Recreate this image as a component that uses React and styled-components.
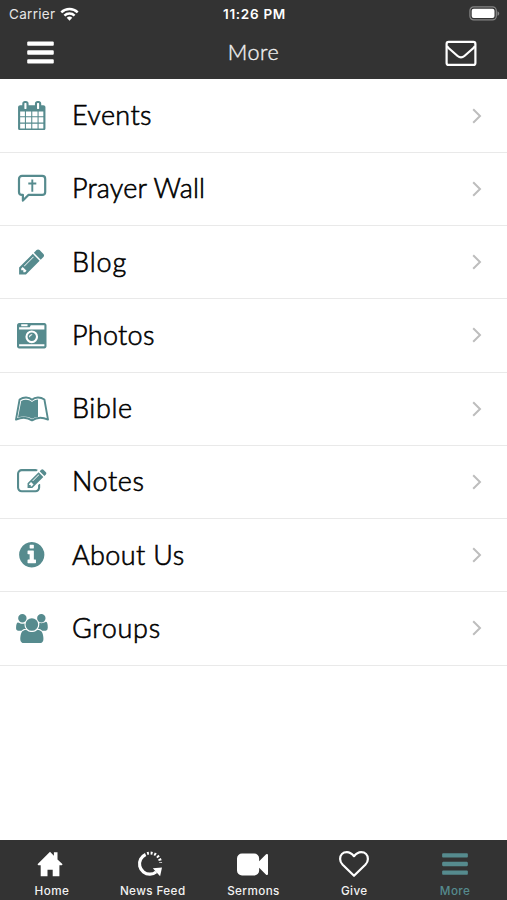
import React from "react";
import styled, { createGlobalStyle } from "styled-components";

const GlobalStyle = createGlobalStyle`
  * {
    box-sizing: border-box;
  }
  body {
    margin: 0;
    background: #fff;
    font-family: Lato, "Liberation Sans", sans-serif;
  }
`;

const CalendarIcon = () => (
  <svg width="29.5" height="29.5" viewBox="0 0 1792 1792" fill="currentColor">
    <path d="M192 1664h288v-288h-288v288zm352 0h320v-288h-320v288zm-352-352h288v-320h-288v320zm352 0h320v-320h-320v320zm-352-384h288v-288h-288v288zm736 736h320v-288h-320v288zm-384-736h320v-288h-320v288zm768 736h288v-288h-288v288zm-384-352h320v-320h-320v320zm-352-864v-288q0-13-9.5-22.5t-22.5-9.5h-64q-13 0-22.5 9.5t-9.5 22.5v288q0 13 9.5 22.5t22.5 9.5h64q13 0 22.5-9.5t9.5-22.5zm736 864h288v-320h-288v320zm-384-384h320v-288h-320v288zm384 0h288v-288h-288v288zm32-480v-288q0-13-9.5-22.5t-22.5-9.5h-64q-13 0-22.5 9.5t-9.5 22.5v288q0 13 9.5 22.5t22.5 9.5h64q13 0 22.5-9.5t9.5-22.5zm384-64v1280q0 52-38 90t-90 38h-1408q-52 0-90-38t-38-90v-1280q0-52 38-90t90-38h128v-96q0-66 47-113t113-47h64q66 0 113 47t47 113v96h384v-96q0-66 47-113t113-47h64q66 0 113 47t47 113v96h128q52 0 90 38t38 90z" />
  </svg>
);

const PrayerIcon = () => (
  <svg width="30" height="30" viewBox="0 0 30 30" fill="none" stroke="currentColor" strokeWidth="2.2">
    <path
      strokeLinejoin="round"
      d="M5 1.900h20.200a3 3 0 0 1 3 3v13a3 3 0 0 1-3 3H11.400L5.900 26.600v-5.700H5a3 3 0 0 1-3-3v-13a3 3 0 0 1 3-3z"
    />
    <path strokeWidth="1.900" d="M15.300 5.500v12.300M11.300 9.500h8" />
  </svg>
);

const PencilIcon = () => (
  <svg width="29.5" height="29.5" viewBox="0 0 1792 1792" fill="currentColor">
    <path d="M491 1536l91-91-235-235-91 91v107h128v128h107zm523-928q0-22-22-22-10 0-17 7l-542 542q-7 7-7 17 0 22 22 22 10 0 17-7l542-542q7-7 7-17zm-54-192l416 416-832 832h-416v-416zm683 96q0 53-37 90l-166 166-416-416 166-165q36-38 90-38 53 0 91 38l235 234q37 39 37 91z" />
  </svg>
);

const CameraIcon = () => (
  <svg width="29.5" height="29.5" viewBox="0 0 1792 1792" fill="currentColor">
    <path d="M928 832q0-14-9-23t-23-9q-66 0-113 47t-47 113q0 14 9 23t23 9 23-9 9-23q0-40 28-68t68-28q14 0 23-9t9-23zm224 130q0 106-75 181t-181 75-181-75-75-181 75-181 181-75 181 75 75 181zm-1024 574h1536v-128h-1536v128zm1152-574q0-159-112.5-271.5t-271.5-112.5-271.5 112.5-112.5 271.5 112.5 271.5 271.5 112.5 271.5-112.5 112.5-271.5zm-1024-642h384v-128h-384v128zm-128 192h1536v-256h-828l-64 128h-644v128zm1664-256v1280q0 53-37.5 90.5t-90.5 37.5h-1536q-53 0-90.5-37.5t-37.5-90.5v-1280q0-53 37.5-90.5t90.5-37.5h1536q53 0 90.5 37.5t37.5 90.5z" />
  </svg>
);

const BookIcon = () => (
  <svg width="34" height="26" viewBox="0 0 34 26" fill="none" stroke="currentColor">
    <path
      strokeWidth="1.900"
      strokeLinejoin="round"
      d="M4.600 3.500c4-2.700 9.300-2.700 12.400.3 3.100-3 8.400-3 12.400-.3L33 23.600c-5.200-2.400-11.600-2.300-16 .8-4.400-3.100-10.800-3.200-16-.8z"
    />
    <path
      fill="currentColor"
      stroke="none"
      d="M6.200 4.900c3.700-1.900 7.900-1.500 10.800 1.200 1.700-1.500 3.700-2.400 6-2.600v17.400c-2.300.2-4.300.8-6 1.900-4-2.500-9-3-14-1.300z"
    />
  </svg>
);

const NotesIcon = () => (
  <svg width="29.5" height="29.5" viewBox="0 0 1792 1792" fill="currentColor">
    <path d="M888 1184l116-116-152-152-116 116v56h96v96h56zm440-720q-16-16-33 1l-350 350q-17 17-1 33t33-1l350-350q17-17 1-33zm80 594v190q0 119-84.5 203.5t-203.5 84.5h-832q-119 0-203.5-84.5t-84.5-203.5v-832q0-119 84.5-203.5t203.5-84.5h832q63 0 117 25 15 7 18 23 3 17-9 29l-49 49q-14 14-32 8-23-6-45-6h-832q-66 0-113 47t-47 113v832q0 66 47 113t113 47h832q66 0 113-47t47-113v-126q0-13 9-22l64-64q15-15 35-7t20 29zm-96-738l288 288-672 672h-288v-288zm444 132l-92 92-288-288 92-92q28-28 68-28t68 28l152 152q28 28 28 68t-28 68z" />
  </svg>
);

const InfoIcon = () => (
  <svg width="29.5" height="29.5" viewBox="0 0 1792 1792" fill="currentColor">
    <path d="M1152 1376v-160q0-14-9-23t-23-9h-96v-512q0-14-9-23t-23-9h-320q-14 0-23 9t-9 23v160q0 14 9 23t23 9h96v320h-96q-14 0-23 9t-9 23v160q0 14 9 23t23 9h448q14 0 23-9t9-23zm-128-896v-160q0-14-9-23t-23-9h-192q-14 0-23 9t-9 23v160q0 14 9 23t23 9h192q14 0 23-9t9-23zm640 416q0 209-103 385.5t-279.5 279.5-385.5 103-385.5-103-279.5-279.5-103-385.5 103-385.5 279.5-279.5 385.5-103 385.5 103 279.5 279.5 103 385.5z" />
  </svg>
);

const GroupsIcon = () => (
  <svg width="33.7" height="29.5" viewBox="0 0 2048 1792" fill="currentColor">
    <path d="M657 896q-162 5-265 128h-134q-82 0-138-40.5t-56-118.5q0-353 124-353 6 0 43.5 21t97.5 42.5 119 21.5q67 0 133-23-5 37-5 66 0 159 90 293zm1071 637q0 120-73 189.5t-194 69.5h-874q-121 0-194-69.5t-73-189.5q0-53 3.5-103.5t14-109 26.5-108.5 43-97.5 62-81 85.5-53.5 111.5-20q10 0 43 21.5t73 48 107 48 135 21.5 135-21.5 107-48 73-48 43-21.5q61 0 111.5 20t85.5 53.5 62 81 43 97.5 26.5 108.5 14 109 3.5 103.5zm-1024-1277q0 106-75 181t-181 75-181-75-75-181 75-181 181-75 181 75 75 181zm704 384q0 159-112.5 271.5t-271.5 112.5-271.5-112.5-112.5-271.5 112.5-271.5 271.5-112.5 271.5 112.5 112.5 271.5zm576 225q0 78-56 118.5t-138 40.5h-134q-103-123-265-128 90-134 90-293 0-29-5-66 66 23 133 23 59 0 119-21.5t97.5-42.5 43.5-21q124 0 124 353zm-128-609q0 106-75 181t-181 75-181-75-75-181 75-181 181-75 181 75 75 181z" />
  </svg>
);

const BarsIcon = ({ size = 31 }) => (
  <svg width={size} height={size} viewBox="0 0 1792 1792" fill="currentColor">
    <path d="M1664 1344v128q0 26-19 45t-45 19h-1408q-26 0-45-19t-19-45v-128q0-26 19-45t45-19h1408q26 0 45 19t19 45zm0-512v128q0 26-19 45t-45 19h-1408q-26 0-45-19t-19-45v-128q0-26 19-45t45-19h1408q26 0 45 19t19 45zm0-512v128q0 26-19 45t-45 19h-1408q-26 0-45-19t-19-45v-128q0-26 19-45t45-19h1408q26 0 45 19t19 45z" />
  </svg>
);

const EnvelopeIcon = () => (
  <svg width="32" height="26" viewBox="0 0 32 26" fill="none" stroke="#fff" strokeWidth="2.200">
    <rect x="1.600" y="1.900" width="28.800" height="23" rx="2" />
    <path strokeLinejoin="round" d="M2 5.900c.8 1.500 2.200 2.800 3.800 4.100l6.800 6c2.300 2 4.500 2 6.800 0l6.800-6c1.600-1.300 3-2.600 3.800-4.100" />
  </svg>
);

const WifiIcon = () => (
  <svg width="19" height="14" viewBox="0 0 19 14" fill="none" stroke="#fff" strokeWidth="2.500">
    <path d="M1.300 5.300a11.800 11.800 0 0 1 16.400 0" />
    <path d="M4.400 8.600a7.400 7.400 0 0 1 10.200 0" />
    <path d="M9.500 13.700l-2.800-2.900a4.200 4.200 0 0 1 5.600 0z" fill="#fff" stroke="none" />
  </svg>
);

const BatteryIcon = () => (
  <svg width="31" height="15" viewBox="0 0 31 15">
    <rect x="0.900" y="0.900" width="26.400" height="13" rx="3.800" fill="none" stroke="#858585" strokeWidth="1.200" />
    <rect x="2.700" y="2.700" width="22.800" height="9.400" rx="2" fill="#fff" />
    <path d="M28.500 5.200c2.300 1 2.300 3.600 0 4.600z" fill="#858585" />
  </svg>
);

const ChevronIcon = () => (
  <svg width="10" height="16" viewBox="0 0 10 16" fill="none" stroke="#bdbdbd" strokeWidth="2">
    <path d="M1.200 1.200L8 8l-6.800 6.800" />
  </svg>
);

const HomeIcon = () => (
  <svg width="26" height="26" viewBox="0 0 26 26" fill="#fff">
    <path d="M13 .8l3.900 3.900V1.200h3.600v7.200l5.100 4.900-.8 1h-2.400v11h-6.700v-6.600h-5.200v6.600H3.700v-11H1.300l-.8-1z" />
  </svg>
);

const FeedIcon = () => (
  <svg width="28" height="28" viewBox="0 0 28 28" fill="none" stroke="#fff">
    <path strokeWidth="3.200" d="M9.600 4.500A10.300 10.300 0 0 0 14 24.200c2.300 0 4.600-.9 6.200-2.300" />
    <path fill="#fff" stroke="none" d="M16.800 18.300l9.200-.7-1.900 8.600z" />
    <path strokeWidth="3" strokeDasharray="1.900 1.700" d="M11.100 3.500a10.500 10.500 0 0 1 13.500 9.300" />
  </svg>
);

const VideoIcon = () => (
  <svg width="31" height="31" viewBox="0 0 1792 1792" fill="#fff">
    <path d="M1792 352v1088q0 42-39 59-13 5-25 5-27 0-45-19l-403-403v166q0 119-84.5 203.5t-203.5 84.5h-704q-119 0-203.5-84.5t-84.5-203.5v-704q0-119 84.5-203.5t203.5-84.5h704q119 0 203.5 84.5t84.5 203.5v165l403-402q18-19 45-19 12 0 25 5 39 17 39 59z" />
  </svg>
);

const HeartIcon = () => (
  <svg width="32" height="28" viewBox="0 0 32 28" fill="none" stroke="#fff" strokeWidth="2.200" strokeLinejoin="round">
    <path d="M16 25.800L4.700 14.800C3 13 2.100 11.300 2.100 8.900c0-4.200 2.700-6.800 6.800-6.800 3 0 5.300 1.900 7.100 4.100 1.800-2.200 4.100-4.100 7.100-4.100 4.100 0 6.800 2.600 6.800 6.800 0 2.400-.9 4.100-2.600 5.900z" />
  </svg>
);

const menu = [
  { label: "Events", icon: <CalendarIcon />, spacing: 0.4 },
  { label: "Prayer Wall", icon: <PrayerIcon />, spacing: 0.15 },
  { label: "Blog", icon: <PencilIcon />, spacing: 0.9 },
  { label: "Photos", icon: <CameraIcon />, spacing: 0.3 },
  { label: "Bible", icon: <BookIcon />, spacing: 0.6 },
  { label: "Notes", icon: <NotesIcon />, spacing: 0.6 },
  { label: "About Us", icon: <InfoIcon />, spacing: 0.4 },
  { label: "Groups", icon: <GroupsIcon />, spacing: 0.7 },
];

const tabs = [
  { label: "Home", icon: <HomeIcon />, nudge: -4 },
  { label: "News Feed", icon: <FeedIcon />, nudge: -5 },
  { label: "Sermons", icon: <VideoIcon />, nudge: -1 },
  { label: "Give", icon: <HeartIcon />, nudge: 0 },
  { label: "More", icon: <BarsIcon size={30} />, nudge: 0, active: true },
];

export default function App() {
  return (
    <StScreen>
      <GlobalStyle />
      <StHeader>
        <StStatusBar>
          <StCarrier>
            Carrier
            <WifiIcon />
          </StCarrier>
          <StTime>11:26 PM</StTime>
          <StBattery>
            <BatteryIcon />
          </StBattery>
        </StStatusBar>
        <StNavBar>
          <StNavButton aria-label="Menu">
            <BarsIcon />
          </StNavButton>
          <StTitle>More</StTitle>
          <StNavButton aria-label="Messages" $right>
            <EnvelopeIcon />
          </StNavButton>
        </StNavBar>
      </StHeader>
      <StMenu>
        {menu.map((item) => (
          <StMenuItem key={item.label}>
            <StMenuIcon>{item.icon}</StMenuIcon>
            <StMenuLabel $spacing={item.spacing}>{item.label}</StMenuLabel>
            <ChevronIcon />
          </StMenuItem>
        ))}
      </StMenu>
      <StTabBar>
        {tabs.map((tab) => (
          <StTab key={tab.label} $active={tab.active}>
            <StTabIcon $nudge={tab.nudge}>{tab.icon}</StTabIcon>
            <span>{tab.label}</span>
          </StTab>
        ))}
      </StTabBar>
    </StScreen>
  );
}

const StScreen = styled.div`
  width: 100%;
  height: 100vh;
  display: flex;
  flex-direction: column;
  overflow: hidden;
  svg {
    display: block;
    flex: none;
  }
`;

const StHeader = styled.header`
  height: 79px;
  flex: none;
  background: #333;
  color: #fff;
`;

const StStatusBar = styled.div`
  height: 26px;
  display: grid;
  grid-template-columns: 1fr auto 1fr;
  align-items: center;
  padding: 0 7px 0 9px;
  font-family: Inter, "Liberation Sans", sans-serif;
  font-size: 13.5px;
`;

const StCarrier = styled.div`
  display: flex;
  align-items: center;
  gap: 5px;
  padding-top: 1px;
  color: #e6e6e6;
  letter-spacing: 0.3px;
`;

const StTime = styled.div`
  padding-top: 1px;
  font-weight: 600;
  letter-spacing: 0.7px;
`;

const StBattery = styled.div`
  display: flex;
  justify-content: flex-end;
`;

const StNavBar = styled.div`
  height: 53px;
  display: grid;
  grid-template-columns: 1fr auto 1fr;
  align-items: center;
  padding: 0 30px 0 25px;
`;

const StNavButton = styled.button`
  display: flex;
  justify-self: ${(props) => (props.$right ? "end" : "start")};
  padding: ${(props) => (props.$right ? "1px 0 0" : "0 0 1px")};
  background: none;
  border: none;
  color: #fff;
  cursor: pointer;
`;

const StTitle = styled.h1`
  margin: 0;
  padding: 0 0 2px 5px;
  font-size: 21.5px;
  font-weight: 300;
  letter-spacing: 0.5px;
  color: #f0f0f0;
  -webkit-text-stroke: 0.4px #f0f0f0;
`;

const StMenu = styled.ul`
  flex: 1;
  margin: 0;
  padding: 0.5px 0 0;
  list-style: none;
`;

const StMenuItem = styled.li`
  height: 73.25px;
  display: flex;
  align-items: center;
  padding-right: 25px;
  border-bottom: 1.500px solid #e9e9e9;
`;

const StMenuIcon = styled.div`
  width: 64px;
  margin-right: 8px;
  display: flex;
  justify-content: center;
  color: #568b8e;
`;

const StMenuLabel = styled.span`
  flex: 1;
  padding-bottom: 2px;
  font-size: 27px;
  font-weight: 300;
  letter-spacing: ${(props) => props.$spacing}px;
  color: #000;
  -webkit-text-stroke: 0.6px #000;
`;

const StTabBar = styled.nav`
  height: 60px;
  flex: none;
  display: grid;
  grid-template-columns: repeat(5, 100.8px);
  justify-content: center;
  background: #333;
`;

const StTab = styled.div`
  display: flex;
  flex-direction: column;
  align-items: center;
  padding-top: 5px;
  font-family: Inter, "Liberation Sans", sans-serif;
  font-size: 11.700px;
  font-weight: 500;
  line-height: 16px;
  letter-spacing: 0.4px;
  color: ${(props) => (props.$active ? "#568b8e" : "#f2f2f2")};
`;

const StTabIcon = styled.div`
  height: 38px;
  display: flex;
  align-items: center;
  margin-left: ${(props) => props.$nudge}px;
`;
